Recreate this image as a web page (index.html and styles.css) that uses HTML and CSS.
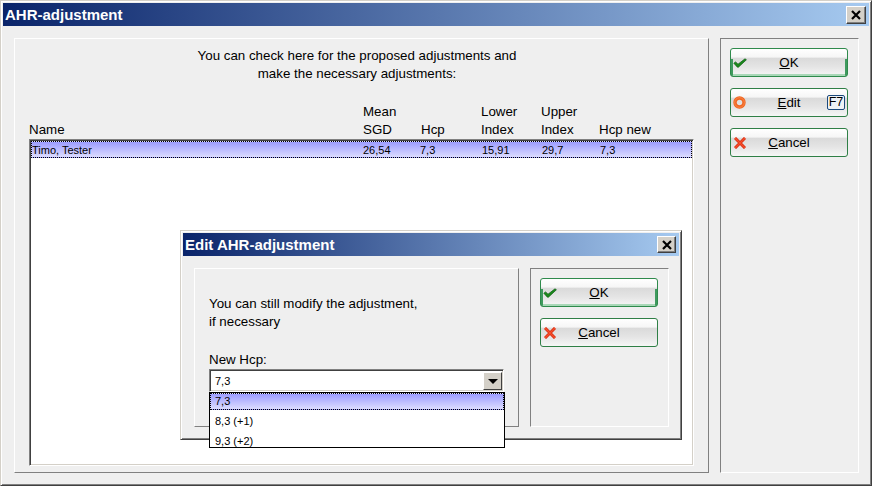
FILE: index.html
```html
<!DOCTYPE html>
<html lang="en">
<head>
<meta charset="utf-8">
<title>AHR-adjustment</title>
<link rel="stylesheet" href="styles.css">
</head>
<body>
<svg class="defs" width="0" height="0" aria-hidden="true">
  <symbol id="i-check" viewBox="0 0 14 10"><path d="M.8 5.200l1.800-1.300 2.400 2.300L12 .8l1.400 1-8 7.400H4.400z" fill="#1a8a1a" stroke="#0b5a12" stroke-width=".7"/></symbol>
  <symbol id="i-ring" viewBox="0 0 13 13"><circle cx="6.500" cy="6.500" r="4.500" fill="none" stroke="#f0651f" stroke-width="3.400"/><circle cx="6.500" cy="6.500" r="4.800" fill="none" stroke="#ff9a66" stroke-width=".6"/></symbol>
  <symbol id="i-x" viewBox="0 0 12 12"><path d="M1 1l10 10M11 1L1 11" fill="none" stroke="#d92a0e" stroke-width="3"/><path d="M1 1l10 10M11 1L1 11" fill="none" stroke="#f5502c" stroke-width="1.400"/></symbol>
  <symbol id="i-close" viewBox="0 0 10 10"><path d="M1 1l8 8M9 1L1 9" fill="none" stroke="#000" stroke-width="2.200"/></symbol>
</svg>
<div class="window">
  <div class="titlebar">
    <span class="title">AHR-adjustment</span>
    <button class="close"><svg class="close-icon"><use href="#i-close"/></svg></button>
  </div>
  <div class="content">
    <section class="group group-main">
      <p class="intro">You can check here for the proposed adjustments and<br>make the necessary adjustments:</p>
      <div class="cols head">
        <span>Name</span><span>Mean<br>SGD</span><span>Hcp</span><span>Lower<br>Index</span><span>Upper<br>Index</span><span>Hcp new</span>
      </div>
      <div class="list">
        <div class="cols row selected">
          <span>Timo, Tester</span><span>26,54</span><span>7,3</span><span>15,91</span><span>29,7</span><span>7,3</span>
        </div>
      </div>
    </section>
    <aside class="group group-side">
      <button class="btn btn-default"><svg class="ico ico-check"><use href="#i-check"/></svg><span class="lbl"><u>O</u>K</span></button>
      <button class="btn"><svg class="ico ico-ring"><use href="#i-ring"/></svg><span class="lbl"><u>E</u>dit</span><span class="key">F7</span></button>
      <button class="btn"><svg class="ico ico-x"><use href="#i-x"/></svg><span class="lbl"><u>C</u>ancel</span></button>
    </aside>
  </div>

  <div class="dialog">
    <div class="titlebar">
      <span class="title">Edit AHR-adjustment</span>
      <button class="close close-sm"><svg class="close-icon"><use href="#i-close"/></svg></button>
    </div>
    <div class="content">
      <section class="group group-main group-form">
        <p class="msg">You can still modify the adjustment,<br>if necessary</p>
        <label class="field-label">New Hcp:</label>
        <div class="combo-wrap">
          <div class="combo">
            <span class="combo-val">7,3</span>
            <span class="combo-btn"><span class="arrow"></span></span>
          </div>
          <div class="dropdown">
            <div class="opt selected">7,3</div>
            <div class="opt">8,3 (+1)</div>
            <div class="opt">9,3 (+2)</div>
          </div>
        </div>
      </section>
      <aside class="group group-side">
        <button class="btn btn-default"><svg class="ico ico-check"><use href="#i-check"/></svg><span class="lbl"><u>O</u>K</span></button>
        <button class="btn"><svg class="ico ico-x"><use href="#i-x"/></svg><span class="lbl"><u>C</u>ancel</span></button>
      </aside>
    </div>
  </div>
</div>
</body>
</html>
```

FILE: styles.css
```css
* { box-sizing: border-box; }
html, body { margin: 0; padding: 0; }
body {
  width: 872px;
  height: 486px;
  overflow: hidden;
  font-family: "Liberation Sans", Arial, sans-serif;
  font-size: 13.33px;
  line-height: 18px;
  color: #000;
  background: #efefef;
}
.defs { position: absolute; }
p { margin: 0; }

.window {
  position: relative;
  width: 872px;
  height: 486px;
  display: flex;
  flex-direction: column;
  background: #efefef;
  padding: 2px;
  border: 1px solid;
  border-color: #d4d0c8 #404040 #404040 #d4d0c8;
  box-shadow: inset 1px 1px 0 #fff, inset -1px -1px 0 #808080;
}

.titlebar {
  flex: none;
  height: 23px;
  display: flex;
  align-items: center;
  justify-content: space-between;
  padding: 0 3px 0 2px;
  background: linear-gradient(90deg, #0a246a, #a6caf0);
}
.title {
  color: #fff;
  font-weight: bold;
  font-size: 15px;
}
.close {
  width: 20px;
  height: 18px;
  padding: 0;
  display: flex;
  align-items: center;
  justify-content: center;
  background: #d4d0c8;
  border: 1px solid;
  border-color: #fff #404040 #404040 #fff;
  box-shadow: inset -1px -1px 0 #808080;
}
.close-icon { width: 10px; height: 10px; }

.content {
  flex: 1;
  min-height: 0;
  display: flex;
  gap: 11px;
  padding: 12px 10px 10px 11px;
}
.group { border: 1px solid; }
.group-main {
  flex: 1;
  min-width: 0;
  display: flex;
  flex-direction: column;
  border-color: #fff #808080 #808080 #fff;
  padding: 8px 14px 6px;
}
.group-side {
  flex: none;
  width: 139px;
  display: flex;
  flex-direction: column;
  gap: 11px;
  border-color: #808080 #fff #fff #808080;
  padding: 9px;
}

.intro {
  text-align: center;
  padding-right: 9px;
}
.cols {
  display: grid;
  align-items: end;
}
.head {
  margin-top: 20px;
  grid-template-columns: 334px 58px 60px 60px 58px 1fr;
}
.list {
  flex: 1;
  background: #fff;
  border: 1px solid;
  border-color: #808080 #fff #fff #808080;
  box-shadow: inset 1px 1px 0 #404040, inset -1px -1px 0 #d4d0c8;
  padding: 1px;
}
.row {
  grid-template-columns: 331px 57px 62px 60px 58px 1fr;
  height: 17px;
  font-size: 11px;
  line-height: 14px;
}
.selected {
  background: linear-gradient(180deg, #9c9cff, #dcdcff);
  border: 1px dotted #000;
}

.btn {
  width: 118px;
  height: 29px;
  flex: none;
  padding: 0;
  display: grid;
  grid-template-columns: 24px 1fr 24px;
  align-items: center;
  font-family: inherit;
  font-size: 13.33px;
  color: #000;
  border: 1px solid #2f7f46;
  border-radius: 3px;
  background: linear-gradient(180deg, #fff 0%, #f6f6f6 30%, #dadada 34%, #e4e4e4 65%, #f6f6f6 100%);
}
.btn-default {
  border-color: #2f8a4c;
  background:
    linear-gradient(#3f9a5e, #3f9a5e) left bottom / 2px 62% no-repeat,
    linear-gradient(#3f9a5e, #3f9a5e) right bottom / 2px 62% no-repeat,
    linear-gradient(#a9d8b8, #a9d8b8) left bottom / 100% 2px no-repeat,
    linear-gradient(180deg, #fff 0%, #f6f6f6 30%, #dadada 34%, #e4e4e4 65%, #f6f6f6 100%);
}
.ico { grid-column: 1; grid-row: 1; justify-self: start; margin-left: 2px; }
.ico-check { width: 14px; height: 10px; }
.ico-ring { width: 13px; height: 13px; }
.ico-x { width: 12px; height: 12px; margin-left: 3px; }
.lbl { grid-column: 2; grid-row: 1; text-align: center; }
.key {
  grid-column: 3;
  grid-row: 1;
  justify-self: end;
  width: 18px;
  height: 15px;
  margin-right: 2px;
  border: 1px solid #1c4a7c;
  border-radius: 2px;
  font-size: 12.5px;
  line-height: 13px;
  text-align: center;
  background: #eef2f6;
}

.dialog {
  position: absolute;
  left: 179px;
  top: 229px;
  width: 502px;
  height: 210px;
  display: flex;
  flex-direction: column;
  background: #efefef;
  padding: 2px;
  border: 1px solid;
  border-color: #d4d0c8 #404040 #404040 #d4d0c8;
  box-shadow: inset 1px 1px 0 #fff, inset -1px -1px 0 #808080;
}
.close-sm { width: 19px; height: 17px; }
.group-form { padding: 26px 14px 0; }
.field-label { display: block; margin-top: 20px; }
.combo-wrap { position: relative; width: 295px; }
.combo {
  height: 23px;
  display: flex;
  align-items: center;
  justify-content: space-between;
  background: #fff;
  border: 1px solid;
  border-color: #808080 #fff #fff #808080;
  box-shadow: inset 1px 1px 0 #404040, inset -1px -1px 0 #d4d0c8;
  padding: 2px 1px 1px 2px;
}
.combo-val { font-size: 11px; padding-left: 3px; }
.combo-btn {
  width: 19px;
  height: 18px;
  display: flex;
  align-items: center;
  justify-content: center;
  background: #d4d0c8;
  border: 1px solid;
  border-color: #fff #404040 #404040 #fff;
}
.arrow {
  width: 0;
  height: 0;
  border-style: solid;
  border-width: 5px 5px 0;
  border-color: #000 transparent transparent;
}
.dropdown {
  position: absolute;
  left: 0;
  top: 23px;
  width: 296px;
  height: 56px;
  overflow: hidden;
  background: #fff;
  border: 1px solid #000;
  font-size: 11px;
}
.opt {
  height: 17px;
  margin-bottom: 3px;
  line-height: 15px;
  padding: 1px 0 0 5px;
}
.opt.selected { padding: 0 0 0 4px; }
```
